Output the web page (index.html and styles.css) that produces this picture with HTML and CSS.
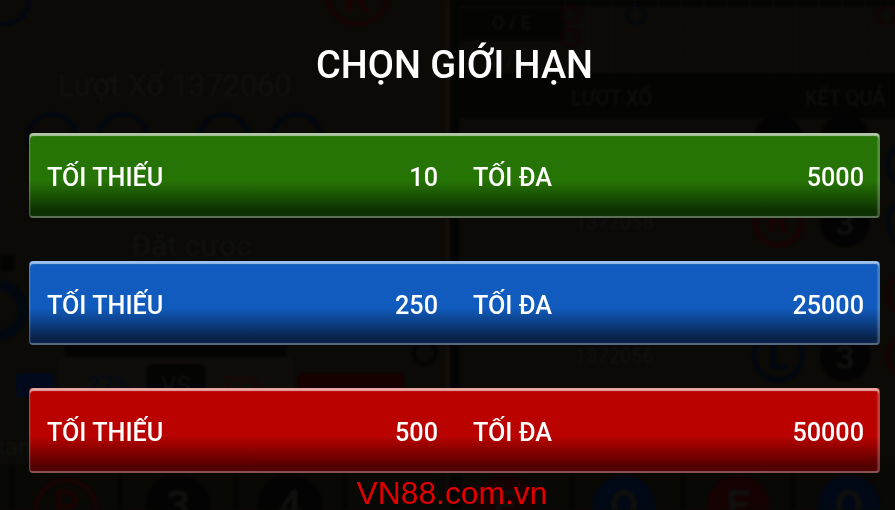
FILE: index.html
```html
<!DOCTYPE html>
<html lang="vi">
<head>
<meta charset="utf-8">
<title>Chọn giới hạn</title>
<link rel="stylesheet" href="styles.css">
</head>
<body>
<div class="stage">
  <svg class="ghost" width="895" height="510" viewBox="0 0 895 510" aria-hidden="true">
    <rect class="g-lane" x="445" y="0" width="5" height="510"/>
    <rect class="g-black" x="450" y="0" width="9" height="510"/>
    <rect class="g-black" x="460" y="8" width="105" height="32"/>
    <rect class="g-black" x="459" y="73" width="436" height="45"/>
    <rect class="g-black" x="459" y="0" width="436" height="6"/>
    <path class="g-grid" d="M565 0V73M588 0V73M612 0V73M635 0V73M658 0V73M681 0V73M704 0V73M727 0V73M750 0V73M773 0V73M796 0V73M819 0V73M842 0V73M865 0V73M888 0V73M565 26H895M565 50H895"/>
    <circle class="g-small-red" cx="570" cy="15" r="9"/>
    <circle class="g-small-red" cx="570" cy="37" r="9"/>
    <circle class="g-small-blue" cx="636" cy="15" r="9"/>
    <circle class="g-small-red" cx="886" cy="15" r="9"/>
    <text class="g-text g-s18" x="492" y="29">O / E</text>
    <text class="g-text g-s18" x="490" y="66">U / X</text>
    <text class="g-text g-s19" x="571" y="105">LƯỢT XỔ</text>
    <text class="g-text g-s19" x="805" y="105">KẾT QUẢ</text>
    <text class="g-text g-s19" x="575" y="229">1372058</text>
    <text class="g-text g-s19" x="575" y="363">1372056</text>

    <circle class="g-blue" cx="4" cy="-1" r="25"/>
    <circle class="g-red" cx="357" cy="-6" r="30"/>
    <text class="g-letter g-letter-red" x="357" y="12">R</text>
    <text class="g-text g-s29" x="58" y="96">Lượt Xổ 1372060</text>
    <circle class="g-blue" cx="52" cy="138" r="24"/>
    <circle class="g-blue" cx="123" cy="138" r="24"/>
    <circle class="g-blue" cx="224" cy="138" r="24"/>
    <circle class="g-blue" cx="297" cy="138" r="24"/>
    <text class="g-text g-s25" x="131" y="256">Đặt cược</text>
    <circle class="g-blue-wide" cx="-2" cy="310" r="25"/>
    <rect class="g-black" x="0" y="255" width="14" height="16"/>

    <rect class="g-black" x="65" y="345" width="221" height="11"/>
    <rect class="g-panel" x="58" y="358" width="237" height="40" rx="6"/>
    <rect class="g-black" x="146" y="364" width="60" height="30" rx="8"/>
    <rect class="g-navy" x="16" y="373" width="38" height="24" rx="4"/>
    <rect class="g-maroon" x="298" y="373" width="106" height="24" rx="4"/>
    <text class="g-num-blue" x="87" y="393">27%</text>
    <text class="g-text g-s24" x="161" y="393">VS</text>
    <text class="g-num-red" x="220" y="393">72%</text>
    <circle class="g-thin-ring" cx="425" cy="353" r="11"/>

    <text class="g-text g-s24" x="-3" y="455">tan</text>
    <rect class="g-black" x="0" y="464" width="895" height="46" opacity="0.4"/>
    <path class="g-cell" d="M12 464V510M120 464V510M236 464V510M345 464V510M459 464V510M572 464V510M683 464V510M793 464V510"/>

    <circle class="g-red-fat" cx="66" cy="510" r="30"/>
    <text class="g-letter g-letter-red" x="66" y="520">P</text>
    <circle class="g-dark" cx="178" cy="506" r="32"/>
    <text class="g-letter g-letter-grey" x="178" y="520">3</text>
    <circle class="g-dark" cx="290" cy="506" r="32"/>
    <text class="g-letter g-letter-grey" x="290" y="520">4</text>
    <circle class="g-solid-red" cx="505" cy="506" r="31"/>
    <text class="g-letter g-letter-grey" x="505" y="520">E</text>
    <circle class="g-solid-blue" cx="624" cy="506" r="31"/>
    <text class="g-letter g-letter-grey" x="624" y="520">O</text>
    <circle class="g-solid-red" cx="738" cy="506" r="31"/>
    <text class="g-letter g-letter-grey" x="738" y="520">E</text>
    <circle class="g-solid-blue" cx="849" cy="506" r="31"/>
    <text class="g-letter g-letter-grey" x="849" y="520">O</text>

    <circle class="g-dark" cx="778" cy="140" r="25"/>
    <circle class="g-dark" cx="845" cy="140" r="25"/>
    <circle class="g-red-fat" cx="778" cy="222" r="23"/>
    <text class="g-letter g-letter-red g-mid" x="778" y="233">R</text>
    <circle class="g-dark" cx="845" cy="222" r="25"/>
    <text class="g-letter g-letter-grey g-mid" x="845" y="235">3</text>
    <circle class="g-blue" cx="778" cy="356" r="24"/>
    <text class="g-letter g-letter-blue g-mid" x="778" y="369">L</text>
    <circle class="g-dark" cx="845" cy="356" r="25"/>
    <text class="g-letter g-letter-grey g-mid" x="845" y="369">3</text>
    <circle class="g-blue" cx="912" cy="165" r="24"/>
    <circle class="g-blue" cx="912" cy="222" r="24"/>
    <circle class="g-red" cx="912" cy="295" r="24"/>
    <circle class="g-red" cx="912" cy="356" r="24"/>
  </svg>

  <main class="modal">
    <h1 class="title">CHỌN GIỚI HẠN</h1>
    <div class="limits">
      <button class="limit limit-green" type="button">
        <span class="pair"><span>TỐI THIẾU</span><span>10</span></span>
        <span class="pair"><span>TỐI ĐA</span><span>5000</span></span>
      </button>
      <button class="limit limit-blue" type="button">
        <span class="pair"><span>TỐI THIẾU</span><span>250</span></span>
        <span class="pair"><span>TỐI ĐA</span><span>25000</span></span>
      </button>
      <button class="limit limit-red" type="button">
        <span class="pair"><span>TỐI THIẾU</span><span>500</span></span>
        <span class="pair"><span>TỐI ĐA</span><span>50000</span></span>
      </button>
    </div>
    <p class="brand">VN88.com.vn</p>
  </main>
</div>
</body>
</html>
```
FILE: styles.css
```css
* { box-sizing: border-box; }
html, body { margin: 0; padding: 0; background: #0a0a07; }
.stage {
  position: relative;
  width: 895px;
  height: 510px;
  overflow: hidden;
  background: #0b0a07;
  font-family: Roboto, "Liberation Sans", sans-serif;
}
.ghost { position: absolute; inset: 0; display: block; filter: blur(0.8px); }
.modal {
  position: relative;
  display: flex;
  flex-direction: column;
  align-items: center;
  padding: 0 15px 0 29px;
  filter: blur(0.35px);
}
.title {
  flex: none;
  margin: 0;
  height: 133px;
  padding-top: 43px;
  font-size: 38px;
  line-height: 44px;
  font-weight: 500;
  color: #fff;
  white-space: nowrap;
}
.limits {
  flex: none;
  width: 851px;
  display: flex;
  flex-direction: column;
  gap: 43px;
}
.limit {
  display: grid;
  grid-template-columns: 1fr 1fr;
  column-gap: 35px;
  align-items: center;
  flex: none;
  width: 100%;
  height: 85px;
  margin: 0;
  padding: 7px 15px 0 17px;
  border: 1px solid rgba(255, 255, 255, 0.22);
  border-top: 0;
  border-bottom-width: 2px;
  border-bottom-color: rgba(255, 255, 255, 0.32);
  border-radius: 4px;
  background-origin: border-box;
  font: 500 25.2px/30px Roboto, "Liberation Sans", sans-serif;
  color: #fff;
}
.pair { display: flex; justify-content: space-between; }
.limit-green {
  background-image: linear-gradient(#267405 0, #267405 56%, #0d3002 92%);
  box-shadow: inset 0 3px 1px #b0c6a4, inset -2px 0 1px rgba(255, 255, 255, 0.16);
}
.limit-blue {
  height: 84px;
  background-image: linear-gradient(#105bbd 0, #105bbd 56%, #09224a 92%);
  box-shadow: inset 0 3px 1px #9cc0ec, inset -2px 0 1px rgba(255, 255, 255, 0.16);
}
.limit-red {
  background-image: linear-gradient(#ba0300 0, #ba0300 56%, #520000 92%);
  box-shadow: inset 0 3px 1px #e8a6a4, inset -2px 0 1px rgba(255, 255, 255, 0.16);
}
.brand {
  flex: none;
  margin: 2px 0 0;
  padding-right: 5px;
  font: 400 31.8px/36px "Liberation Sans", Arial, sans-serif;
  color: #e00000;
  white-space: nowrap;
}

/* dimmed game table behind the dialog */
.g-black { fill: #040403; }
.g-lane { fill: #140c07; }
.g-panel { fill: #0e0d0a; }
.g-navy { fill: #010a1c; }
.g-maroon { fill: #160000; }
.g-grid, .g-cell { fill: none; stroke: #0f0f0c; stroke-width: 1; }
.g-cell { stroke: #030302; stroke-width: 3; }
.g-text { fill: #111210; font-family: Roboto, "Liberation Sans", sans-serif; }
.g-s18 { font-size: 18px; }
.g-s19 { font-size: 20px; }
.g-s24 { font-size: 24px; }
.g-s25 { font-size: 30px; }
.g-s29 { font-size: 30.5px; }
.g-num-blue, .g-num-red { font: 400 24px Roboto, "Liberation Sans", sans-serif; }
.g-num-blue { fill: #030a1a; }
.g-num-red { fill: #1e0404; }
.g-blue { fill: none; stroke: #010712; stroke-width: 4; }
.g-blue-wide { fill: none; stroke: #020810; stroke-width: 10; }
.g-red { fill: none; stroke: #180303; stroke-width: 4; }
.g-red-fat { fill: none; stroke: #180303; stroke-width: 5; }
.g-small-red { fill: none; stroke: #160303; stroke-width: 2; }
.g-small-blue { fill: none; stroke: #010712; stroke-width: 2; }
.g-thin-ring { fill: none; stroke: #030303; stroke-width: 3; }
.g-dark { fill: #030303; }
.g-solid-red { fill: #160202; }
.g-solid-blue { fill: #010916; }
.g-letter { font: 700 42px Roboto, "Liberation Sans", sans-serif; text-anchor: middle; }
.g-mid { font-size: 34px; }
.g-letter-red { fill: #180303; }
.g-letter-grey { fill: #0f0f0d; }
.g-letter-blue { fill: #010712; }
```
